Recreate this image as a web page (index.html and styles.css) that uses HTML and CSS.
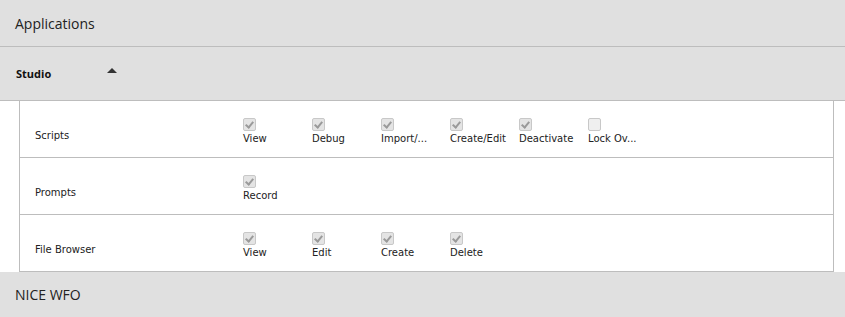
FILE: index.html
```html
<!DOCTYPE html>
<html lang="en">
<head>
    <meta charset="UTF-8">
    <title>Applications</title>
    <link rel="stylesheet" href="styles.css">
</head>
<body>

    <div class="section-header">Applications</div>

    <div class="group-header">
        <span class="group-title">Studio</span>
        <span class="caret"></span>
    </div>

    <div class="panel">
        <div class="perm-row">
            <div class="perm-name">Scripts</div>
            <div class="perm-list">
                <div class="perm"><span class="check on"></span><span class="perm-label">View</span></div>
                <div class="perm"><span class="check on"></span><span class="perm-label">Debug</span></div>
                <div class="perm"><span class="check on"></span><span class="perm-label">Import/...</span></div>
                <div class="perm"><span class="check on"></span><span class="perm-label">Create/Edit</span></div>
                <div class="perm"><span class="check on"></span><span class="perm-label">Deactivate</span></div>
                <div class="perm"><span class="check"></span><span class="perm-label">Lock Ov...</span></div>
            </div>
        </div>
        <div class="perm-row">
            <div class="perm-name">Prompts</div>
            <div class="perm-list">
                <div class="perm"><span class="check on"></span><span class="perm-label">Record</span></div>
            </div>
        </div>
        <div class="perm-row">
            <div class="perm-name">File Browser</div>
            <div class="perm-list">
                <div class="perm"><span class="check on"></span><span class="perm-label">View</span></div>
                <div class="perm"><span class="check on"></span><span class="perm-label">Edit</span></div>
                <div class="perm"><span class="check on"></span><span class="perm-label">Create</span></div>
                <div class="perm"><span class="check on"></span><span class="perm-label">Delete</span></div>
            </div>
        </div>
    </div>

    <div class="section-header last">NICE WFO</div>

</body>
</html>
```

FILE: styles.css
```css
* {
    margin: 0;
    padding: 0;
    box-sizing: border-box;
}

body {
    font-family: "Open Sans", Arial, sans-serif;
    background-color: #fff;
    color: #222;
}

/* top level bars */
.section-header {
    height: 47px;
    padding-left: 15px;
    display: flex;
    align-items: center;
    font-size: 14px;
    background-color: #e0e0e0;
    border-bottom: 1px solid #bdbdbd;
    color: #222;
}

.section-header.last {
    height: 45px;
    border-bottom: none;
}

/* Studio bar */
.group-header {
    height: 54px;
    padding-left: 16px;
    display: flex;
    align-items: center;
    background-color: #e0e0e0;
    border-bottom: 1px solid #bdbdbd;
}

.group-title {
    width: 91px;
    margin-top: -1px;
    font-size: 11px;
    font-weight: bold;
    color: #111;
}

.caret {
    width: 0;
    height: 0;
    margin-top: -7px;
    border-left: 5px solid transparent;
    border-right: 5px solid transparent;
    border-bottom: 5px solid #333;
}

/* permission table */
.panel {
    margin: 0 11px 0 19px;
    background-color: #fff;
    border-left: 1px solid #bdbdbd;
    border-right: 1px solid #bdbdbd;
}

.perm-row {
    height: 57px;
    padding: 17px 0 0 15px;
    display: flex;
    border-bottom: 1px solid #bdbdbd;
    font-family: "DejaVu Sans", Verdana, sans-serif;
    font-size: 10px;
}

.perm-name {
    width: 208px;
    margin-top: 12px;
    color: #222;
}

.perm-list {
    display: flex;
}

.perm {
    width: 69px;
    display: flex;
    flex-direction: column;
    align-items: flex-start;
}

.perm-label {
    margin-top: 2px;
    white-space: nowrap;
    color: #222;
}

.check {
    position: relative;
    width: 13px;
    height: 13px;
    border: 1px solid #c8c8c8;
    border-radius: 2px;
    background-color: #efefef;
}

.check.on {
    background-color: #e4e4e4;
}

.check.on::after {
    content: "";
    position: absolute;
    left: 3px;
    top: 1px;
    width: 3px;
    height: 6px;
    border-right: 2px solid #9a9a9a;
    border-bottom: 2px solid #9a9a9a;
    transform: rotate(40deg);
}
```
